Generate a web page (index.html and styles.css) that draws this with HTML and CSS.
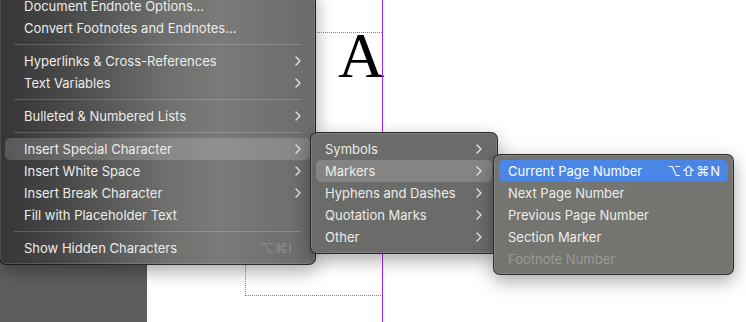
FILE: index.html
```html
<!DOCTYPE html>
<html lang="en">
<head>
  <meta charset="UTF-8" />
  <title>Type Menu – Insert Special Character</title>
  <link rel="stylesheet" href="styles.css">
</head>
<body>
  <div class="workspace">
    <div class="pasteboard"></div>
    <div class="page">
      <div class="frame-top"></div>
      <div class="frame-box"></div>
      <div class="glyph-a">A</div>
      <div class="margin-line"></div>
    </div>
  </div>

  <!-- main Type menu -->
  <div class="menu menu-main">
    <div class="item"><span>Document Endnote Options...</span></div>
    <div class="item"><span>Convert Footnotes and Endnotes...</span></div>
    <div class="sep"></div>
    <div class="item"><span>Hyperlinks &amp; Cross-References</span><svg class="chev" viewBox="0 0 6 10"><polyline points="1,1 5,5 1,9"/></svg></div>
    <div class="item"><span>Text Variables</span><svg class="chev" viewBox="0 0 6 10"><polyline points="1,1 5,5 1,9"/></svg></div>
    <div class="sep"></div>
    <div class="item"><span>Bulleted &amp; Numbered Lists</span><svg class="chev" viewBox="0 0 6 10"><polyline points="1,1 5,5 1,9"/></svg></div>
    <div class="sep"></div>
    <div class="item open"><span>Insert Special Character</span><svg class="chev" viewBox="0 0 6 10"><polyline points="1,1 5,5 1,9"/></svg></div>
    <div class="item"><span>Insert White Space</span><svg class="chev" viewBox="0 0 6 10"><polyline points="1,1 5,5 1,9"/></svg></div>
    <div class="item"><span>Insert Break Character</span><svg class="chev" viewBox="0 0 6 10"><polyline points="1,1 5,5 1,9"/></svg></div>
    <div class="item"><span>Fill with Placeholder Text</span></div>
    <div class="sep"></div>
    <div class="item"><span>Show Hidden Characters</span><span class="keys dim">⌥⌘I</span></div>
  </div>

  <!-- Insert Special Character submenu -->
  <div class="menu menu-sub">
    <div class="item"><span>Symbols</span><svg class="chev" viewBox="0 0 6 10"><polyline points="1,1 5,5 1,9"/></svg></div>
    <div class="item open"><span>Markers</span><svg class="chev" viewBox="0 0 6 10"><polyline points="1,1 5,5 1,9"/></svg></div>
    <div class="item"><span>Hyphens and Dashes</span><svg class="chev" viewBox="0 0 6 10"><polyline points="1,1 5,5 1,9"/></svg></div>
    <div class="item"><span>Quotation Marks</span><svg class="chev" viewBox="0 0 6 10"><polyline points="1,1 5,5 1,9"/></svg></div>
    <div class="item"><span>Other</span><svg class="chev" viewBox="0 0 6 10"><polyline points="1,1 5,5 1,9"/></svg></div>
  </div>

  <!-- Markers submenu -->
  <div class="menu menu-markers">
    <div class="item active"><span>Current Page Number</span><span class="keys">⌥⇧⌘N</span></div>
    <div class="item"><span>Next Page Number</span></div>
    <div class="item"><span>Previous Page Number</span></div>
    <div class="item"><span>Section Marker</span></div>
    <div class="item disabled"><span>Footnote Number</span></div>
  </div>
</body>
</html>
```

FILE: styles.css
```css
:root {
  --menu-text: #ececea;
  --menu-dim: #8e8e8c;
  --row: 22px;
  --blue: #4a86e6;
}

html, body {
  margin: 0;
  padding: 0;
  width: 746px;
  height: 322px;
  overflow: hidden;
  font-family: 'Inter', 'Liberation Sans', sans-serif;
}

.workspace {
  display: flex;
  height: 322px;
}

.pasteboard {
  width: 147px;
  background: #5e5e5e;
}

.page {
  flex: 1;
  position: relative;
  background: #fff;
}

/* text frame guides */
.frame-top {
  position: absolute;
  left: 98px;
  top: 32px;
  width: 137px;
  border-top: 1px dotted #5b8ad6;
}

.frame-box {
  position: absolute;
  left: 98px;
  top: 230px;
  width: 137px;
  height: 65px;
  border-left: 1px dotted #5b8ad6;
  border-bottom: 1px dotted #5b8ad6;
}

.glyph-a {
  position: absolute;
  left: 191px;
  top: 18px;
  font-family: 'Liberation Serif', serif;
  font-size: 64px;
  line-height: 76px;
  color: #000;
}

.margin-line {
  position: absolute;
  left: 235px;
  top: 0;
  bottom: 0;
  width: 1px;
  background: #a226f2;
}

/* menus */
.menu {
  position: absolute;
  box-sizing: border-box;
  padding: 5px;
  border: 1px solid rgba(20, 20, 20, 0.75);
  border-radius: 7px;
  box-shadow: inset 0 0 0 1px rgba(255, 255, 255, 0.12), 0 6px 18px rgba(0, 0, 0, 0.35);
  font-size: 13px;
  color: var(--menu-text);
}

.menu-main {
  left: -1px;
  top: -11px;
  width: 317px;
  height: 276px;
  background: linear-gradient(90deg, #353535 0%, #4a4a4a 22%, #717170 55%, #7a7a78 70%, #6b6b6a 100%);
}

.menu-sub {
  left: 310px;
  top: 132px;
  width: 188px;
  height: 122px;
  background: #6b6b69;
}

.menu-markers {
  left: 493px;
  top: 154px;
  width: 241px;
  height: 121px;
  background: #747471;
}

.item {
  display: flex;
  align-items: center;
  justify-content: space-between;
  height: var(--row);
  padding: 0 9px;
  border-radius: 5px;
  white-space: nowrap;
}

.menu-main .item {
  padding-left: 19px;
  padding-right: 9px;
}

.menu-sub .item {
  padding-right: 10px;
}

.item.open {
  background: rgba(255, 255, 255, 0.17);
}

.item.active {
  background: var(--blue);
  color: #fff;
  padding-right: 7px;
}

.item.disabled {
  color: #9a9a97;
}

.sep {
  height: 1px;
  margin: 5px 9px;
  background: rgba(255, 255, 255, 0.18);
}

.chev {
  width: 6px;
  height: 10px;
}

.chev polyline {
  fill: none;
  stroke: #e4e4e2;
  stroke-width: 1.4;
  stroke-linecap: round;
  stroke-linejoin: round;
}

.keys {
  letter-spacing: 1px;
}

.keys.dim {
  color: var(--menu-dim);
  margin-right: 8px;
}
```
